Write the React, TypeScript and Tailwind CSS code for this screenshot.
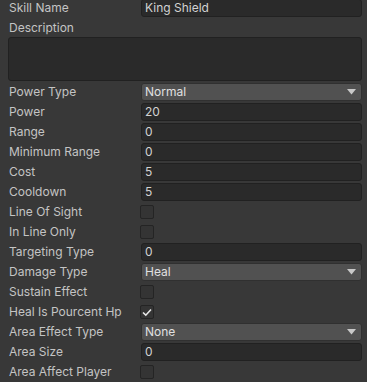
const Label = ({ text }: { text: string }) => (
  <div className="w-[133px] shrink-0 whitespace-nowrap pl-[1px] text-[#c4c4c4]">{text}</div>
);

const TextField = ({ label, value }: { label: string; value: string }) => (
  <div className="flex h-[18px] items-center">
    <Label text={label} />
    <div className="flex h-[18px] flex-1 items-center rounded-[3px] border border-[#212121] bg-[#2a2a2a] px-[3px] text-[#d2d2d2]">
      {value}
    </div>
  </div>
);

const Dropdown = ({ label, value }: { label: string; value: string }) => (
  <div className="flex h-[18px] items-center">
    <Label text={label} />
    <div className="flex h-[18px] flex-1 items-center justify-between rounded-[3px] border border-[#303030] bg-[#515151] pl-[3px] pr-[5px] text-[#e0e0e0]">
      <span>{value}</span>
      <svg width="9" height="6" viewBox="0 0 9 6">
        <polygon points="0,0 9,0 4.5,5.5" fill="#c8c8c8" />
      </svg>
    </div>
  </div>
);

const Checkbox = ({ label, checked }: { label: string; checked?: boolean }) => (
  <div className="flex h-[18px] items-center">
    <div className="w-[132px] shrink-0 whitespace-nowrap pl-[1px] text-[#c4c4c4]">{label}</div>
    <div className="flex h-[14px] w-[14px] items-center justify-center rounded-[2px] border border-[#242424] bg-[#343434]">
      {checked && (
        <svg width="10" height="9" viewBox="0 0 10 9">
          <path d="M1 4.5 L3.8 7.2 L9 1.5" stroke="#e8e8e8" strokeWidth="1.6" fill="none" />
        </svg>
      )}
    </div>
  </div>
);

export default function App() {
  return (
    <div
      className="h-[382px] w-[367px] overflow-hidden bg-[#383838] pl-[8px] pr-[5px] text-[12px] leading-[18px]"
      style={{ fontFamily: "Inter, 'Noto Sans', sans-serif" }}
    >
      <div className="-mt-[1px] flex flex-col gap-[2px]">
        <TextField label="Skill Name" value="King Shield" />
        <div>
          <div className="flex h-[18px] items-center pl-[1px] text-[#c4c4c4]">Description</div>
          <div className="h-[44px] rounded-[3px] border border-[#212121] bg-[#2a2a2a]" />
        </div>
        <Dropdown label="Power Type" value="Normal" />
        <TextField label="Power" value="20" />
        <TextField label="Range" value="0" />
        <TextField label="Minimum Range" value="0" />
        <TextField label="Cost" value="5" />
        <TextField label="Cooldown" value="5" />
        <Checkbox label="Line Of Sight" />
        <Checkbox label="In Line Only" />
        <TextField label="Targeting Type" value="0" />
        <Dropdown label="Damage Type" value="Heal" />
        <Checkbox label="Sustain Effect" />
        <Checkbox label="Heal Is Pourcent Hp" checked />
        <Dropdown label="Area Effect Type" value="None" />
        <TextField label="Area Size" value="0" />
        <Checkbox label="Area Affect Player" />
      </div>
    </div>
  );
}
